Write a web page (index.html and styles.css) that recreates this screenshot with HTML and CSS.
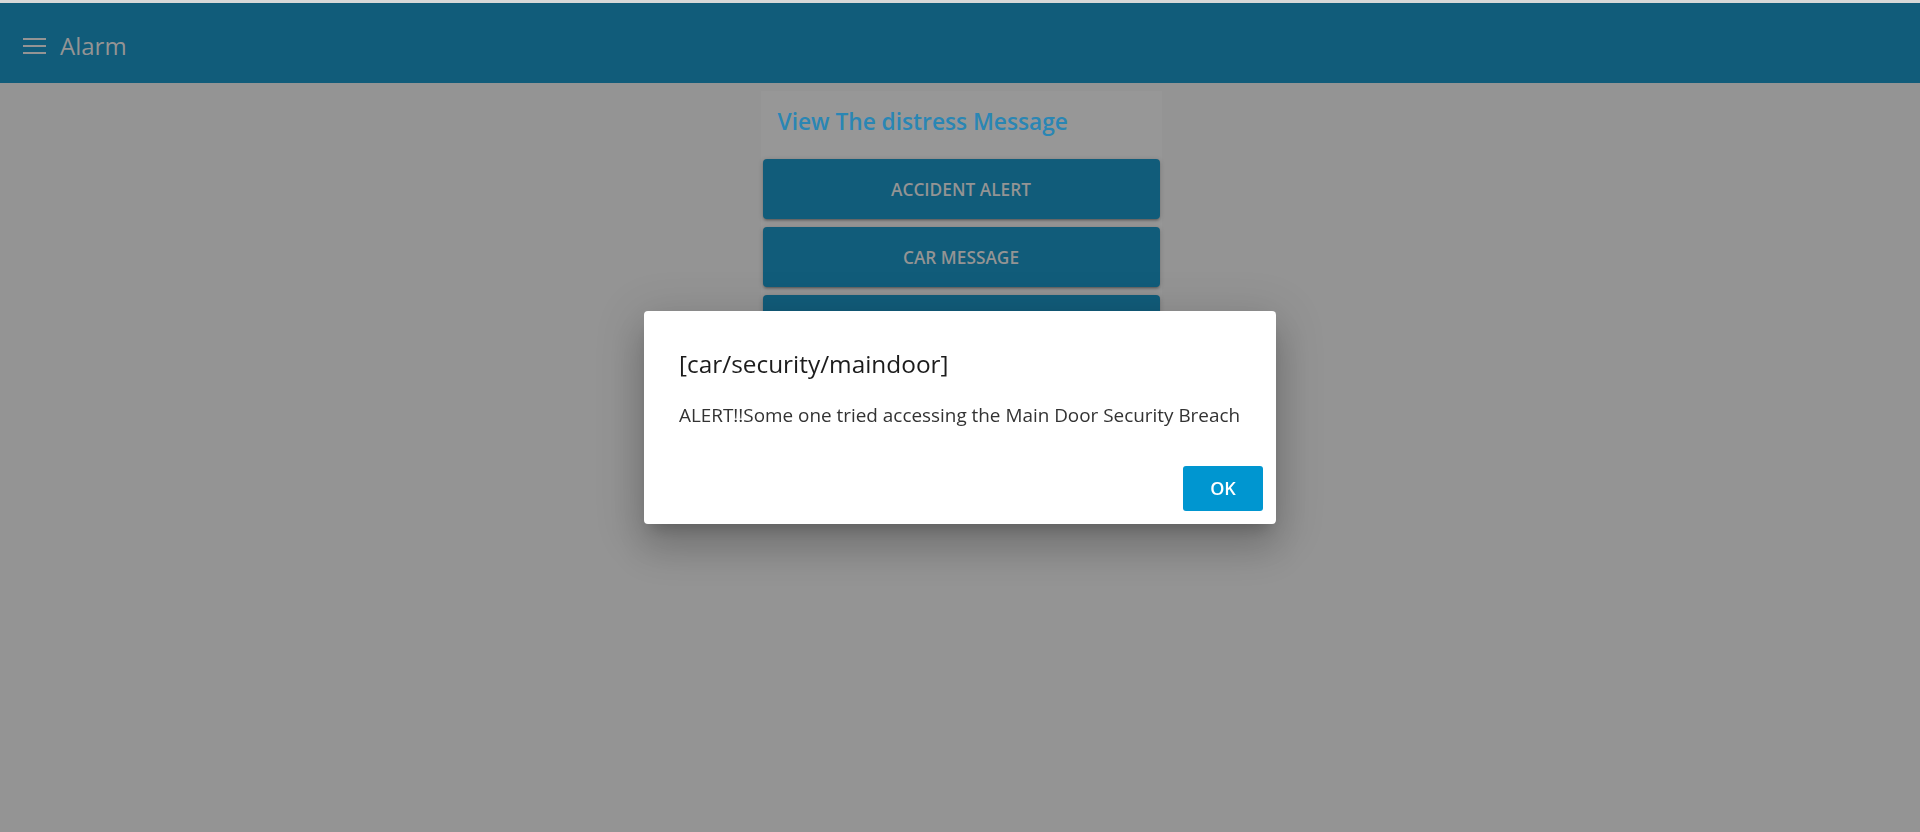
FILE: index.html
```html
<!DOCTYPE html>
<html lang="en">
<head>
<meta charset="utf-8">
<title>Alarm</title>
<link rel="stylesheet" href="styles.css">
</head>
<body>
<div class="top-strip"></div>
<header class="app-bar">
  <svg class="menu-icon" width="23" height="16" viewBox="0 0 23 16" aria-hidden="true">
    <rect x="0" y="0" width="23" height="2" fill="currentColor"/>
    <rect x="0" y="7" width="23" height="2" fill="currentColor"/>
    <rect x="0" y="14" width="23" height="2" fill="currentColor"/>
  </svg>
  <span class="app-title">Alarm</span>
</header>
<main class="content">
  <section class="card">
    <h2 class="card-title">View The distress Message</h2>
    <div class="btn-list">
      <button class="raised-btn">ACCIDENT ALERT</button>
      <button class="raised-btn">CAR MESSAGE</button>
      <button class="raised-btn">SECURITY MESSAGE</button>
    </div>
  </section>
</main>
<div class="backdrop">
  <div class="dialog" role="alertdialog">
    <h3 class="dialog-title">[car/security/maindoor]</h3>
    <p class="dialog-text">ALERT!!Some one tried accessing the Main Door Security Breach</p>
    <div class="dialog-actions">
      <button class="ok-btn">OK</button>
    </div>
  </div>
</div>
</body>
</html>
```
FILE: styles.css
```css
html, body {
  margin: 0;
  padding: 0;
}
body {
  background: #949494;
  font-family: "Open Sans", "Noto Sans", sans-serif;
  height: 832px;
  overflow: hidden;
}
.top-strip {
  height: 3px;
  background: #d8d8d8;
}
.app-bar {
  height: 80px;
  box-sizing: border-box;
  background: #115c7a;
  display: flex;
  align-items: center;
  padding: 5px 0 0 23px;
  color: #949494;
}
.menu-icon {
  display: block;
  margin-right: 14px;
}
.app-title {
  font-size: 24px;
  line-height: 30px;
}
.content {
  display: flex;
  flex-direction: column;
  align-items: center;
  padding: 8px 0 0 2px;
}
.card {
  width: 401px;
  background: #979797;
  box-sizing: border-box;
  padding: 0 2px 8px;
}
.card-title {
  margin: 0;
  padding: 15px 15px 21px;
  font-size: 22.7px;
  line-height: 32px;
  font-weight: 600;
  color: #2a86b4;
}
.btn-list {
  display: flex;
  flex-direction: column;
  gap: 8px;
}
.raised-btn {
  height: 60px;
  border: 0;
  border-radius: 4px;
  background: #115c7a;
  color: #949494;
  font-family: inherit;
  font-size: 17.3px;
  font-weight: 600;
  padding-top: 2px;
  box-shadow: 0 2px 2px rgba(0,0,0,0.14), 0 3px 1px -2px rgba(0,0,0,0.12), 0 1px 5px rgba(0,0,0,0.2);
}
.backdrop {
  position: fixed;
  inset: 0;
  display: flex;
  align-items: center;
  justify-content: center;
  padding-top: 2px;
}
.dialog {
  width: 632px;
  box-sizing: border-box;
  background: #fff;
  border-radius: 4px;
  padding: 38px 13px 13px 35px;
  box-shadow: 0 11px 15px -7px rgba(0,0,0,0.2), 0 24px 38px 3px rgba(0,0,0,0.14), 0 9px 46px 8px rgba(0,0,0,0.12);
}
.dialog-title {
  margin: 0;
  font-size: 24.4px;
  line-height: 30px;
  font-weight: 400;
  color: #1c1c1c;
}
.dialog-text {
  margin: 24px 0 0;
  font-size: 18.9px;
  line-height: 24px;
  color: #333;
}
.dialog-actions {
  display: flex;
  justify-content: flex-end;
  margin-top: 39px;
}
.ok-btn {
  width: 80px;
  height: 45px;
  border: 0;
  border-radius: 3px;
  background: #0096d0;
  color: #fff;
  font-family: inherit;
  font-size: 18px;
  font-weight: 600;
}
```
